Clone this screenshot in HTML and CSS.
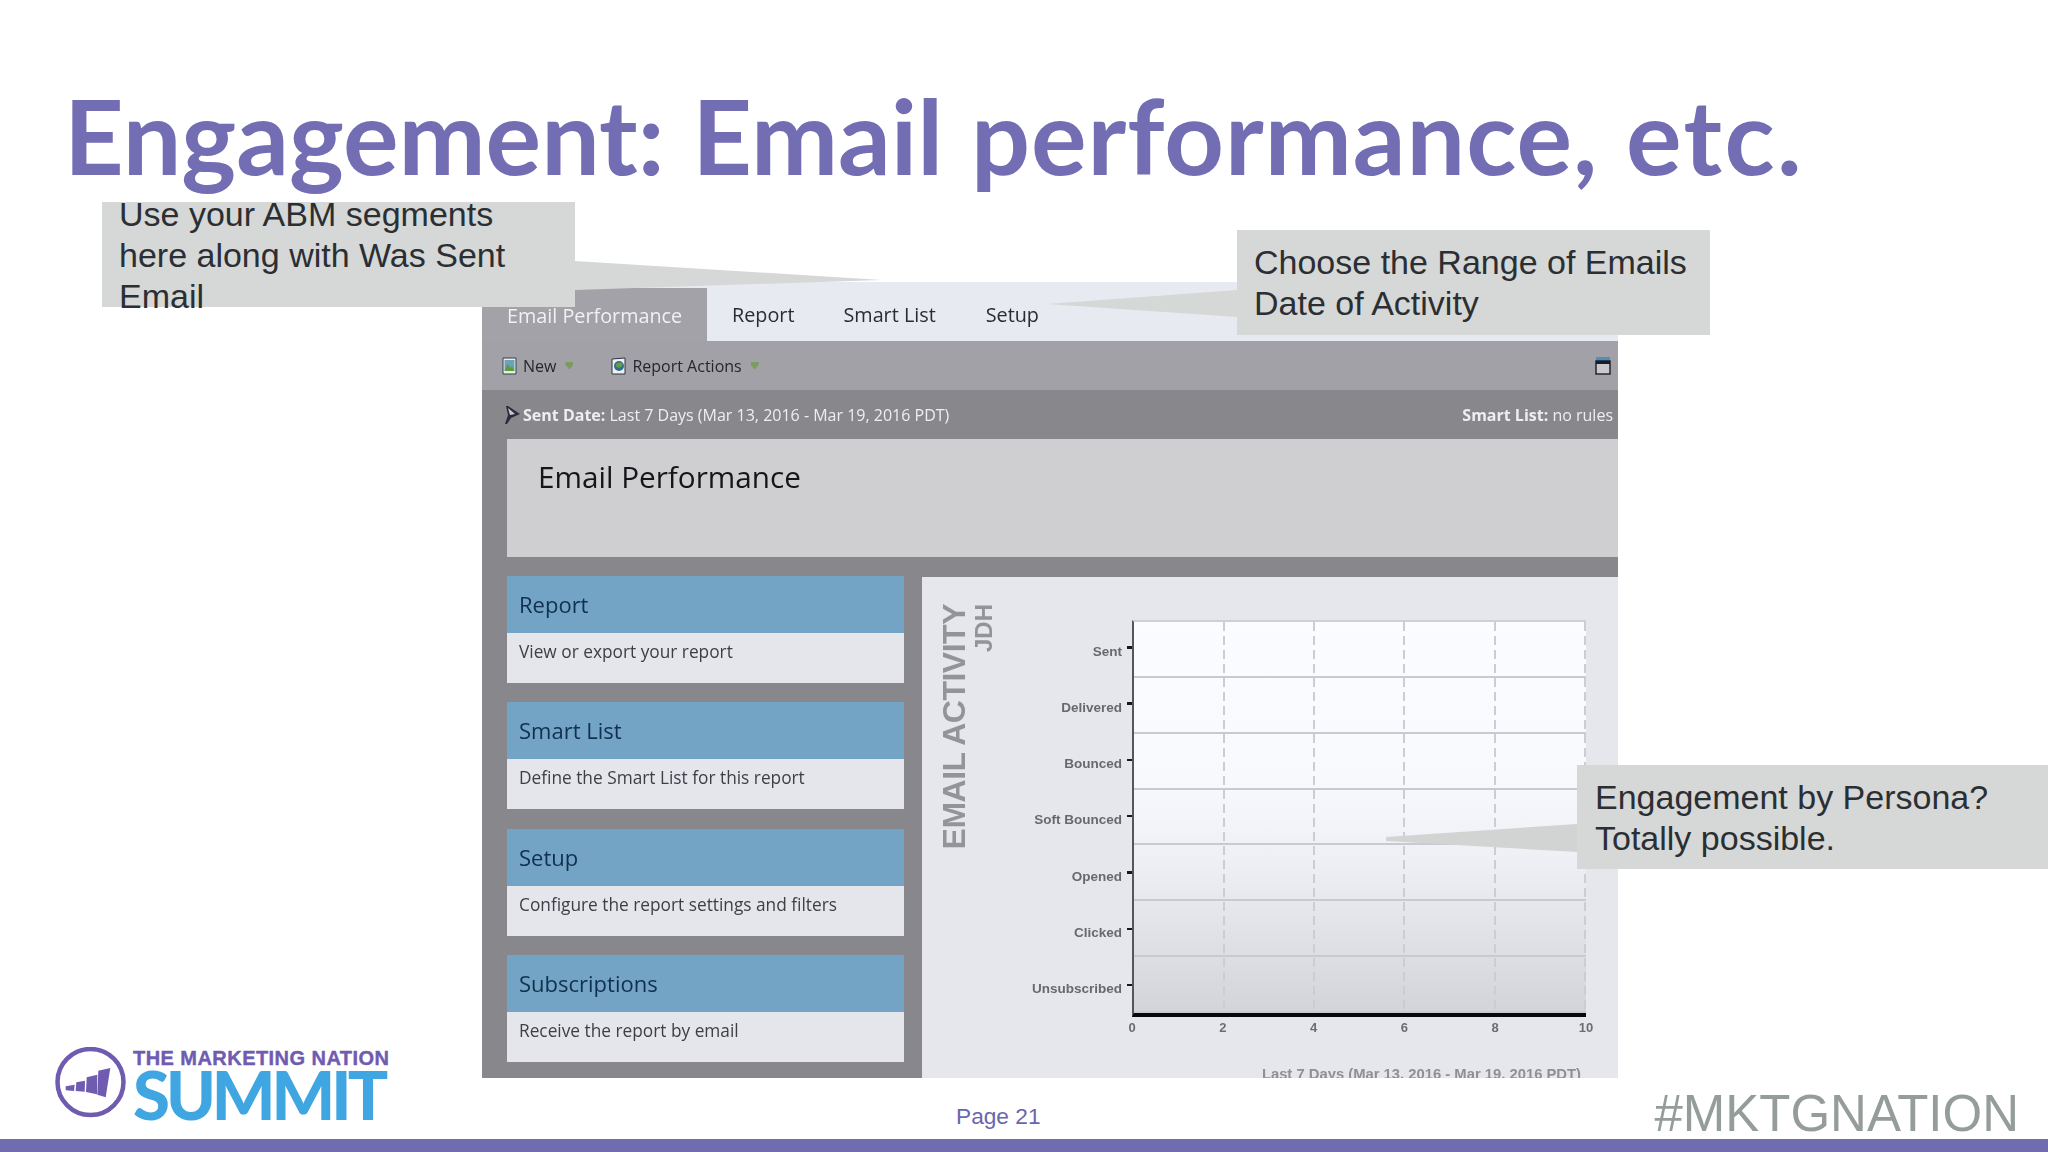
FILE: index.html
```html
<!DOCTYPE html>
<html lang="en">
<head>
<meta charset="utf-8">
<title>Engagement: Email performance, etc.</title>
<link rel="stylesheet" href="styles.css">
</head>
<body>
<div class="slide">
  <h1 class="title">Engagement: Email <span class="title-wide">performance,</span> <span class="title-wider">etc.</span></h1>

  <div class="logo">
    <svg class="logo-mark" viewBox="0 0 72 72" width="72" height="72">
      <circle cx="35.5" cy="35" r="33" fill="none" stroke="#6f5bb0" stroke-width="4.5"/>
      <polygon fill="#6f5bb0" points="10.7,39.3 19.7,37.7 19,44 10.7,43.3"/>
      <polygon fill="#6f5bb0" points="21.3,35.3 30,33.7 29.7,44.7 20.7,44"/>
      <polygon fill="#6f5bb0" points="31.7,30.3 42.3,27.7 42,47.3 31,45"/>
      <polygon fill="#6f5bb0" points="43.3,23.7 55.3,21 50.7,50.3 42.3,47.7"/>
    </svg>
    <div class="logo-text">
      <div class="logo-top">THE MARKETING NATION</div>
      <div class="logo-main">SUMMIT</div>
    </div>
  </div>

  <section class="app">
    <nav class="tabs">
      <span class="tab tab-active">Email Performance</span>
      <span class="tab tab-report">Report</span>
      <span class="tab tab-list">Smart List</span>
      <span class="tab">Setup</span>
    </nav>
    <div class="toolbar">
      <span class="tool tool-new">
        <svg class="ico" viewBox="0 0 16 18" width="16" height="18"><path d="M1 1h13v16H1z" fill="#e9eee2" stroke="#34404a"/><path d="M2.5 3h10v11h-10z" fill="#6ea2b8"/><path d="M2.5 14l3-7 3 4 1.5-2 2.5 5z" fill="#5f9a3c"/></svg>
        New<i class="drop"></i>
      </span>
      <span class="tool tool-actions">
        <svg class="ico" viewBox="0 0 16 18" width="16" height="18"><path d="M1 2l13-1v16H1z" fill="#f0f0f2" stroke="#2e3540"/><circle cx="8" cy="9" r="5" fill="#2d6f8f"/><path d="M4.5 8c2-3 6-3 7-1 0 3-3 5-6 3z" fill="#6a9c45"/></svg>
        Report Actions<i class="drop"></i>
      </span>
      <svg class="window-ico" viewBox="0 0 16 18" width="16" height="18"><rect x="1" y="0" width="14" height="4" fill="#4f8fc0"/><rect x="1" y="4" width="14" height="13" fill="#c9c9cd" stroke="#1c1d22" stroke-width="1.4"/><rect x="1" y="4" width="14" height="3" fill="#1c1d22"/></svg>
    </div>
    <div class="infobar">
      <span class="info-left">
        <svg class="pin" viewBox="0 0 18 20" width="18" height="20"><path d="M3 1l2 0 12 8-9 4-4 6-2 0 3-9z" fill="#2b2c3a"/><path d="M5 3l7 6-5 1z" fill="#c9c9d4"/></svg>
        <span><b>Sent Date:</b> Last 7 Days (Mar 13, 2016 - Mar 19, 2016 PDT)</span>
      </span>
      <span class="info-right"><b>Smart List:</b> no rules</span>
    </div>
    <div class="report-head"><h2>Email Performance</h2></div>
    <div class="main">
      <div class="cards">
        <article class="card"><h3>Report</h3><p>View or export your report</p></article>
        <article class="card"><h3>Smart List</h3><p>Define the Smart List for this report</p></article>
        <article class="card"><h3>Setup</h3><p>Configure the report settings and filters</p></article>
        <article class="card"><h3>Subscriptions</h3><p>Receive the report by email</p></article>
      </div>
      <div class="chart">
        <div class="chart-titles">
          <span class="chart-title">EMAIL ACTIVITY</span>
          <span class="chart-sub">JDH</span>
        </div>
        <div class="chart-body">
          <div class="axis">
            <span>Sent</span><span>Delivered</span><span>Bounced</span><span>Soft Bounced</span><span>Opened</span><span>Clicked</span><span>Unsubscribed</span>
          </div>
          <div class="plot">
            <div class="band"></div><div class="band"></div><div class="band"></div><div class="band"></div><div class="band"></div><div class="band"></div><div class="band"></div>
            <div class="dashes"><i></i><i></i><i></i><i></i><i></i></div>
          </div>
          <div class="xaxis"><span>0</span><span>2</span><span>4</span><span>6</span><span>8</span><span>10</span></div>
          <div class="foot">Last 7 Days (Mar 13, 2016 - Mar 19, 2016 PDT)</div>
        </div>
      </div>
    </div>
  </section>

  <div class="footer">
    <span class="page">Page 21</span>
    <span class="hashtag">#MKTGNATION</span>
  </div>
  <div class="bar"></div>

  <svg class="tails" viewBox="0 0 2048 1152" width="2048" height="1152">
    <polygon fill="#d6d8d7" points="575,261 882,280 575,290"/>
    <polygon fill="#d6d8d7" points="1237,290 1047,304 1237,317"/>
    <polygon fill="#d2d4d3" points="1577,824 1386,837 1386,841 1577,852"/>
  </svg>
  <div class="callout callout-a"><p>Use your ABM segments here along with Was Sent Email</p></div>
  <div class="callout callout-b"><p>Choose the Range of Emails Date of Activity</p></div>
  <div class="callout callout-c"><p>Engagement by Persona? Totally possible.</p></div>
</div>
</body>
</html>
```
FILE: styles.css
```css
* { box-sizing: border-box; }
html, body { margin: 0; padding: 0; background: #fff; }
.slide {
  position: relative;
  width: 2048px;
  height: 1152px;
  overflow: hidden;
  background: #fff;
  display: grid;
  grid-template-columns: 482px 1136px 430px;
  grid-template-rows: 282px 796px 61px 13px;
  font-family: "Liberation Sans", Arial, sans-serif;
}
.title {
  grid-column: 1 / 4;
  grid-row: 1;
  margin: 0;
  padding: 75px 0 0 64px;
  font-family: Lato, sans-serif;
  font-weight: 700;
  font-size: 104px;
  line-height: 120px;
  word-spacing: 2.5px;
  color: #736db3;
  white-space: nowrap;
}
.title-wide { letter-spacing: 1px; }
.title-wider { letter-spacing: 2.5px; }

/* logo */
.logo {
  grid-column: 1;
  grid-row: 2 / 4;
  align-self: end;
  display: flex;
  gap: 6px;
  padding: 0 0 20px 55px;
}
.logo-mark { flex: none; }
.logo-top {
  font-family: "Liberation Sans", sans-serif;
  font-weight: 700;
  font-size: 20px;
  line-height: 22px;
  color: #6f5bb0;
  white-space: nowrap;
  letter-spacing: 0.45px;
  -webkit-text-stroke: 0.4px #6f5bb0;
}
.logo-main {
  font-family: Lato, sans-serif;
  font-weight: 900;
  font-size: 67px;
  line-height: 50px;
  color: #40a6e2;
  letter-spacing: -4px;
}

/* app screenshot */
.app {
  grid-column: 2;
  grid-row: 2;
  display: flex;
  flex-direction: column;
  background: #88878c;
  font-family: "Open Sans", sans-serif;
  overflow: hidden;
  filter: blur(0.5px);
}
.tabs {
  height: 59px;
  display: flex;
  align-items: flex-end;
  background: #e8eaf1;
  flex: none;
}
.tab {
  font-size: 19.8px;
  line-height: 30px;
  padding-bottom: 11px;
  color: #2a2c31;
  white-space: nowrap;
}
.tab-active {
  width: 225px;
  height: 53px;
  padding: 13px 0 0 25px;
  background: #a2a2a8;
  color: #f1f1f3;
}
.tab-report { margin-left: 25px; }
.tab-list { margin-left: 49px; }
.tab-list + .tab { margin-left: 50px; }
.toolbar {
  height: 49px;
  flex: none;
  display: flex;
  align-items: center;
  padding: 0 7px 0 20px;
  background: #a1a1a7;
  font-size: 16px;
  color: #26272c;
}
.tool { display: flex; align-items: center; gap: 5px; }
.ico { flex: none; }
.tool-actions { margin-left: 38px; }
.drop {
  width: 8px;
  height: 8px;
  margin-left: 4px;
  background: #7d9a5f;
  clip-path: polygon(0 0, 100% 0, 100% 40%, 50% 100%, 0 40%);
}
.window-ico { margin-left: auto; }
.infobar {
  height: 49px;
  flex: none;
  display: flex;
  align-items: center;
  justify-content: space-between;
  padding: 0 5px 0 21px;
  font-size: 16px;
  color: #eeeef0;
  white-space: nowrap;
}
.info-left { display: flex; align-items: center; gap: 2px; }
.pin { flex: none; }
.report-head {
  height: 118px;
  flex: none;
  margin-left: 25px;
  padding: 18px 0 0 31px;
  background: #cfcfd1;
}
.report-head h2 {
  margin: 0;
  font-weight: 400;
  font-size: 29.7px;
  line-height: 40px;
  color: #15161a;
}
.main { flex: 1; display: flex; min-height: 0; }
.cards {
  width: 440px;
  flex: none;
  padding: 19px 18px 0 25px;
  display: flex;
  flex-direction: column;
  gap: 19.3px;
}
.card { background: #e5e6ec; height: 107px; }
.card h3 {
  margin: 0;
  height: 57px;
  padding: 13px 0 0 12px;
  background: #73a4c5;
  font-weight: 400;
  font-size: 22px;
  line-height: 30px;
  color: #11304f;
}
.card p {
  margin: 0;
  padding: 7px 0 0 12px;
  font-size: 17.3px;
  line-height: 24px;
  color: #3c3f44;
}
.chart {
  flex: 1;
  margin-top: 20px;
  display: flex;
  background: #e6e7ec;
  overflow: hidden;
  font-family: "Liberation Sans", sans-serif;
}
.chart-titles {
  flex: none;
  width: 72px;
  padding: 27px 0 0 19px;
  display: flex;
  align-items: flex-start;
  gap: 5px;
}
.chart-title, .chart-sub {
  writing-mode: vertical-rl;
  transform: rotate(180deg);
  white-space: nowrap;
  color: #93949a;
}
.chart-title { font-size: 32px; line-height: 27px; font-weight: 700; letter-spacing: -0.5px; }
.chart-sub { font-size: 24px; line-height: 21px; font-weight: 700; }
.chart-body {
  display: grid;
  grid-template-columns: 138px 454px;
  grid-template-rows: 397px 30px auto;
  padding-top: 43px;
}
.axis {
  display: grid;
  grid-template-rows: repeat(7, 1fr);
  padding-top: 3px;
}
.axis span {
  position: relative;
  display: flex;
  align-items: center;
  justify-content: flex-end;
  padding-right: 10px;
  font-size: 13.5px;
  font-weight: 700;
  color: #68686f;
}
.axis span::after {
  content: "";
  position: absolute;
  right: 0;
  top: 50%;
  margin-top: -5px;
  width: 5px;
  height: 2.5px;
  background: #18181c;
}
.plot {
  position: relative;
  display: grid;
  grid-template-rows: repeat(7, 1fr);
  border-left: 2px solid #55565c;
  border-top: 2px solid #cfd0d5;
  border-bottom: 4px solid #08080a;
  background: linear-gradient(#fbfcff 0%, #f8f9fd 40%, #eeeff4 62%, #e2e3e8 78%, #d3d4d9 100%);
}
.band { border-bottom: 2px solid #c9cad0; }
.band:last-of-type { border-bottom: 0; }
.dashes {
  position: absolute;
  inset: 0;
  display: flex;
  justify-content: space-between;
  padding-left: 88.6px;
}
.dashes i {
  width: 2px;
  background: repeating-linear-gradient(#cccdd2 0 9px, transparent 9px 14px);
}
.xaxis {
  grid-column: 2;
  grid-row: 2;
  display: flex;
  justify-content: space-between;
  margin: 0 -10px;
  padding-top: 3px;
  font-size: 13px;
  font-weight: 700;
  color: #6c6c73;
}
.xaxis span { width: 20px; text-align: center; }
.foot {
  grid-column: 1 / 3;
  grid-row: 3;
  justify-self: end;
  padding: 17px 5px 0 0;
  font-size: 14.8px;
  line-height: 20px;
  font-weight: 700;
  color: #8f9096;
  white-space: nowrap;
}

/* footer */
.footer {
  grid-column: 2 / 4;
  grid-row: 3;
  display: flex;
  align-items: flex-end;
  justify-content: space-between;
  padding: 0 29px 0 474px;
}
.page {
  font-size: 22.7px;
  line-height: 28px;
  margin-bottom: 9px;
  color: #6b66ac;
}
.hashtag {
  font-size: 51px;
  line-height: 50px;
  color: #959d9a;
}
.bar {
  grid-column: 1 / 4;
  grid-row: 4;
  background: #716cb0;
}

/* callouts */
.tails { position: absolute; left: 0; top: 0; pointer-events: none; }
.callout {
  position: absolute;
  background: #d6d8d7;
  color: #2b2f33;
  font-size: 34px;
  line-height: 41px;
}
.callout p { margin: 0; }
.callout-a { left: 102px; top: 202px; width: 473px; height: 105px; padding-left: 17px; }
.callout-a p { margin-top: -8px; width: 420px; }
.callout-b { left: 1237px; top: 230px; width: 473px; height: 105px; padding: 12px 0 0 17px; }
.callout-b p { width: 445px; }
.callout-c { left: 1577px; top: 765px; width: 471px; height: 104px; padding: 12px 0 0 18px; }
.callout-c p { width: 420px; }
```
